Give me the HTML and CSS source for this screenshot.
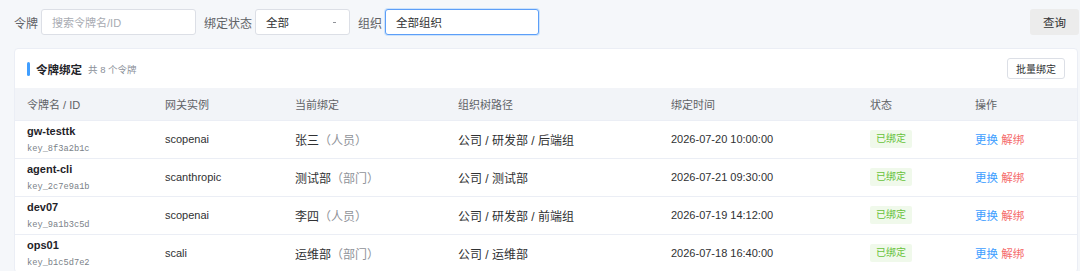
FILE: index.html
```html
<!DOCTYPE html>
<html lang="zh-CN">
<head>
<meta charset="utf-8">
<title>令牌绑定</title>
<link rel="stylesheet" href="styles.css">
</head>
<body>
<div class="page">
  <div class="filters">
    <div class="field">
      <span class="label">令牌</span>
      <div class="input w155"><span class="placeholder">搜索令牌名/ID</span></div>
    </div>
    <div class="field">
      <span class="label">绑定状态</span>
      <div class="input select w95"><span>全部</span><span class="caret"></span></div>
    </div>
    <div class="field">
      <span class="label">组织</span>
      <div class="input focused w154"><span>全部组织</span></div>
    </div>
    <div class="spacer"></div>
    <button class="btn-query">查询</button>
  </div>

  <div class="card">
    <div class="card-head">
      <div class="title-wrap">
        <span class="bar"></span>
        <span class="title">令牌绑定</span>
        <span class="count">共 8 个令牌</span>
      </div>
      <button class="btn-batch">批量绑定</button>
    </div>
    <table class="grid">
      <colgroup>
        <col class="c1"><col class="c2"><col class="c3"><col class="c4"><col class="c5"><col class="c6"><col class="c7">
      </colgroup>
      <thead>
        <tr><th>令牌名 / ID</th><th>网关实例</th><th>当前绑定</th><th>组织树路径</th><th>绑定时间</th><th>状态</th><th>操作</th></tr>
      </thead>
      <tbody>
        <tr>
          <td><div class="name">gw-testtk</div><div class="key">key_8f3a2b1c</div></td>
          <td class="en">scopenai</td>
          <td>张三<span class="muted">（人员）</span></td>
          <td>公司 / 研发部 / 后端组</td>
          <td class="en">2026-07-20 10:00:00</td>
          <td><span class="tag">已绑定</span></td>
          <td class="ops"><span class="link">更换</span> <span class="danger">解绑</span></td>
        </tr>
        <tr>
          <td><div class="name">agent-cli</div><div class="key">key_2c7e9a1b</div></td>
          <td class="en">scanthropic</td>
          <td>测试部<span class="muted">（部门）</span></td>
          <td>公司 / 测试部</td>
          <td class="en">2026-07-21 09:30:00</td>
          <td><span class="tag">已绑定</span></td>
          <td class="ops"><span class="link">更换</span> <span class="danger">解绑</span></td>
        </tr>
        <tr>
          <td><div class="name">dev07</div><div class="key">key_9a1b3c5d</div></td>
          <td class="en">scopenai</td>
          <td>李四<span class="muted">（人员）</span></td>
          <td>公司 / 研发部 / 前端组</td>
          <td class="en">2026-07-19 14:12:00</td>
          <td><span class="tag">已绑定</span></td>
          <td class="ops"><span class="link">更换</span> <span class="danger">解绑</span></td>
        </tr>
        <tr>
          <td><div class="name">ops01</div><div class="key">key_b1c5d7e2</div></td>
          <td class="en">scali</td>
          <td>运维部<span class="muted">（部门）</span></td>
          <td>公司 / 运维部</td>
          <td class="en">2026-07-18 16:40:00</td>
          <td><span class="tag">已绑定</span></td>
          <td class="ops"><span class="link">更换</span> <span class="danger">解绑</span></td>
        </tr>
      </tbody>
    </table>
  </div>
</div>
</body>
</html>
```

FILE: styles.css
```css
* { box-sizing: border-box; }
html, body { margin: 0; padding: 0; }
body {
  background: #f5f7fa;
  font-family: "Liberation Sans", "Noto Sans CJK SC", sans-serif;
  font-size: 12px;
  color: #303133;
  overflow: hidden;
}
.page { padding: 9px 1px 0 14px; }

.filters { display: flex; align-items: center; gap: 8px; height: 26px; }
.field { display: flex; align-items: center; gap: 3px; }
.label { color: #606266; font-size: 12px; }
.input {
  height: 26px;
  border: 1px solid #dcdfe6;
  border-radius: 3px;
  background: #fff;
  display: flex;
  align-items: center;
  padding: 0 10px;
  font-size: 11.5px;
  color: #303133;
}
.w155 { width: 155px; }
.w95 { width: 95px; }
.w154 { width: 154px; }
.placeholder { color: #a8abb2; font-size: 11px; }
.select { justify-content: space-between; }
.caret { width: 3px; height: 1px; background: #909399; margin-right: 3px; }
.focused { border-color: #5c9ef8; box-shadow: 0 0 0 1px rgba(64,158,255,0.22); }
.spacer { flex: 1; }
.btn-query {
  height: 26px; width: 49px;
  border: none; border-radius: 3px;
  background: #ececec;
  color: #303133;
  font-family: inherit; font-size: 11.5px;
}

.card {
  margin-top: 13px;
  width: 1064px;
  background: #fff;
  border: 1px solid #ebeef5;
  border-radius: 4px;
}
.card-head {
  display: flex; align-items: center; justify-content: space-between;
  height: 39px;
  padding: 0 12px;
}
.title-wrap { display: flex; align-items: center; }
.bar { width: 3px; height: 14px; background: #409eff; border-radius: 2px; margin-right: 6px; }
.title { font-size: 11.5px; font-weight: 700; color: #1f2329; }
.count { font-size: 9.5px; color: #8a8f99; margin-left: 6px; }
.btn-batch {
  height: 21px; width: 58px;
  border: 1px solid #dcdfe6; border-radius: 3px;
  background: #fff; color: #303133;
  font-family: inherit; font-size: 10px; padding: 0;
}

.grid { width: 100%; border-collapse: collapse; table-layout: fixed; }
.c1 { width: 138px; } .c2 { width: 130px; } .c3 { width: 163px; }
.c4 { width: 213px; } .c5 { width: 199px; } .c6 { width: 105px; } .c7 { width: 114px; }
.grid th {
  background: #f2f4f8;
  color: #606266;
  font-weight: 400;
  text-align: left;
  height: 32px;
  padding: 0 0 0 12px;
  font-size: 11px;
  border-bottom: 1px solid #ebeef5;
}
.grid td {
  height: 38px;
  padding: 0 0 0 12px;
  border-bottom: 1px solid #ebeef5;
  font-size: 12px;
  color: #303133;
  white-space: nowrap;
}
.grid td.en { font-size: 11px; }
.grid td.ops { font-size: 11.5px; }
.grid tbody tr:last-child td { border-bottom: none; }
.name { font-weight: 700; font-size: 11px; line-height: 16px; color: #1f2329; }
.key { font-family: "Liberation Mono", "DejaVu Sans Mono", monospace; font-size: 8.7px; color: #7a7f88; line-height: 14px; margin-top: 3px; }
.muted { color: #909399; }
.tag {
  display: inline-block;
  height: 18px; line-height: 18px;
  padding: 0 6px;
  background: #f0f9eb;
  color: #67c23a;
  font-size: 10px;
  border-radius: 2px;
}
.link { color: #409eff; }
.danger { color: #f56c6c; }
```
